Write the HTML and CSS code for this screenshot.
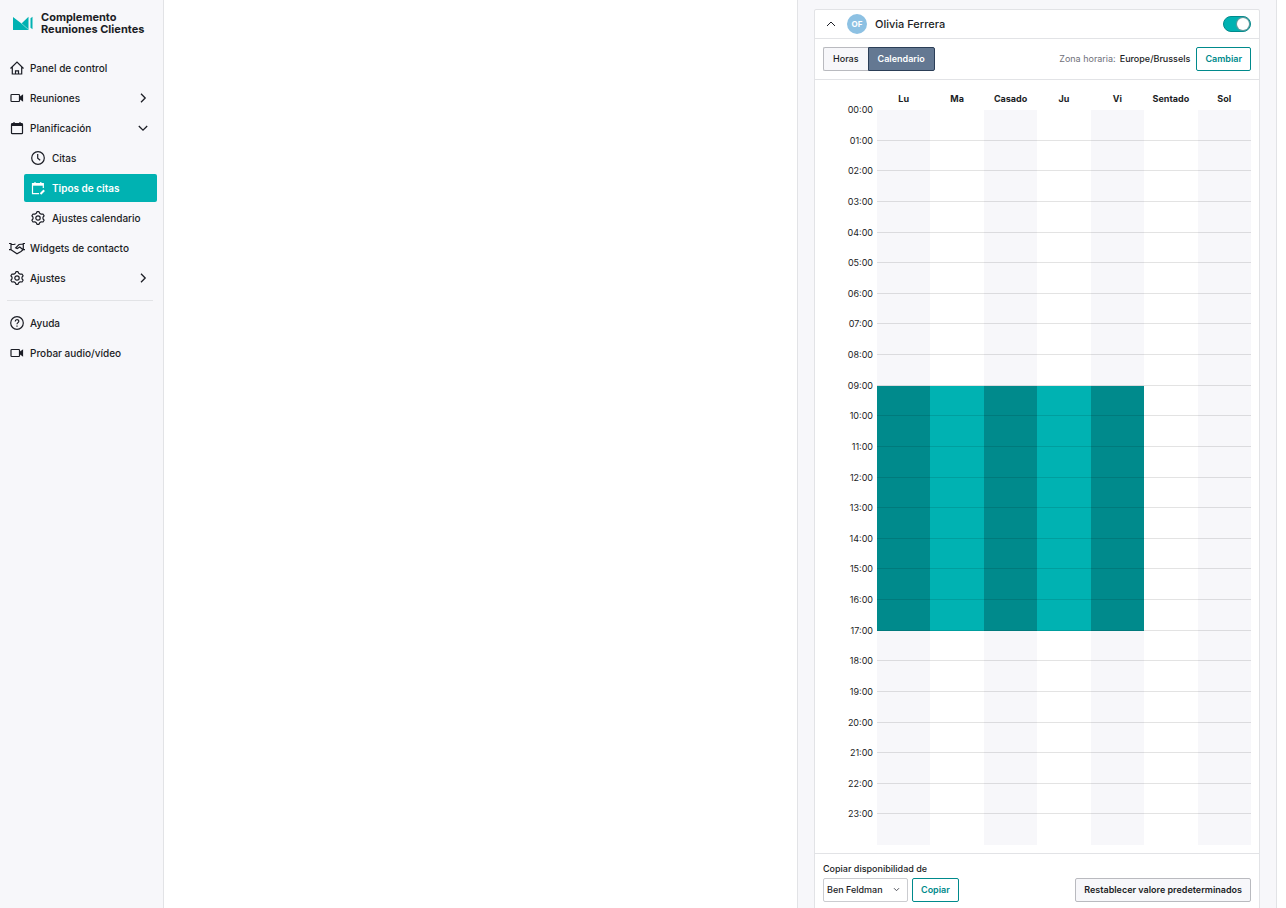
FILE: index.html
```html
<!DOCTYPE html>
<html lang="es">
<head>
    <meta charset="UTF-8">
    <title>Tipos de citas</title>
    <meta name="viewport" content="width=device-width, initial-scale=1">
    <link rel="stylesheet" href="styles.css">
</head>
<body>
<div class="app">
    <aside class="sidebar">
        <div class="brand">
            <svg width="20" height="14" viewBox="0 0 20 14"><path d="M0 1l8.500 6.500L15.500.8V14H0z" fill="#00b2b2"/><path d="M8 7l8 7" stroke="#8fdcdc" stroke-width=".8"/><path d="M17.500 2.300L19.500.8v12.400l-2-1.500z" fill="#00b2b2"/></svg>
            <strong>Complemento<br>Reuniones Clientes</strong>
        </div>
        <nav class="nav">
            <a href="#"><svg class="icon" viewBox="0 0 16 16"><path d="M1.500 8.500L8 2l6.500 6.500M3.300 7v7h9.400V7M6.500 14v-3.200h3V14"/></svg>Panel de control</a>
            <a href="#"><svg class="icon" viewBox="0 0 16 16"><rect x="2" y="4.500" width="8.500" height="7" rx=".8"/><path d="M11 7.200l2.500-1.700v5L11 8.800z" fill="currentColor"/></svg>Reuniones<svg class="arrow" viewBox="0 0 10 10"><path d="M3 .8L7.200 5 3 9.200"/></svg></a>
            <a href="#"><svg class="icon" viewBox="0 0 16 16"><rect x="2.500" y="3.700" width="11" height="10" rx=".8"/><path d="M2.500 5h11" stroke-width="2"/><path d="M5 2v2.500M11 2v2.500"/></svg>Planificación<svg class="arrow" viewBox="0 0 10 10"><path d="M.8 3L5 7.200 9.200 3"/></svg></a>
            <div class="subnav">
                <a href="#"><svg class="icon" viewBox="0 0 16 16"><circle cx="8" cy="8" r="6.300"/><path d="M7.700 4v4.200l2.500 2"/></svg>Citas</a>
                <a href="#" class="active"><svg class="icon" viewBox="0 0 16 16"><path d="M13.300 8V3.700H2.500v10H9M5 2v2M10.800 2v2"/><path d="M2.500 4.700h10.800" stroke-width="2"/><path d="M10.500 14l3.700-3.700" stroke-width="2"/></svg>Tipos de citas</a>
                <a href="#"><svg class="icon" viewBox="0 0 16 16"><path d="M6.300 3.300L7 1.700h2l.7 1.600 1.500.9 1.800-.2 1.100 1.800L13 7.200v1.600l1.100 1.400L13 12l-1.800-.2-1.500.9L9 14.300H7l-.7-1.600-1.500-.9L3 12l-1.100-1.800L3 8.800V7.200L1.900 5.800 3 4l1.800.2z" stroke-linejoin="round"/><circle cx="8" cy="8" r="2.200"/></svg>Ajustes calendario</a>
            </div>
            <a href="#"><svg class="icon" viewBox="0 0 16 16"><path d="M0 3.500h2v6.200H0M16 3.500h-1.700v6.200H16M2 4.500h3L6.500 4M14.300 4L10 4.500 6.700 7.800l1.500.7 2.600-1.500 3.200 2.700M2 9.700l6 4 4-2.200 2-1.800"/></svg>Widgets de contacto</a>
            <a href="#"><svg class="icon" viewBox="0 0 16 16"><path d="M6.300 3.300L7 1.700h2l.7 1.600 1.500.9 1.800-.2 1.100 1.800L13 7.200v1.600l1.100 1.400L13 12l-1.800-.2-1.500.9L9 14.300H7l-.7-1.600-1.500-.9L3 12l-1.100-1.800L3 8.800V7.200L1.900 5.800 3 4l1.800.2z" stroke-linejoin="round"/><circle cx="8" cy="8" r="2.200"/></svg>Ajustes<svg class="arrow" viewBox="0 0 10 10"><path d="M3 .8L7.200 5 3 9.200"/></svg></a>
            <hr>
            <a href="#"><svg class="icon" viewBox="0 0 16 16"><circle cx="8" cy="8" r="6.300"/><path d="M6.200 6.500C6.200 4 9.800 4 9.800 6.300 9.800 7.700 8 7.600 8 9.200M8 10.500v1.300"/></svg>Ayuda</a>
            <a href="#"><svg class="icon" viewBox="0 0 16 16"><rect x="2" y="4.500" width="8.500" height="7" rx=".8"/><path d="M11 7.200l2.500-1.700v5L11 8.800z" fill="currentColor"/></svg>Probar audio/vídeo</a>
        </nav>
    </aside>

    <main class="content"></main>

    <section class="panel">
        <div class="card">
            <div class="card-header">
                <button type="button" class="collapse" aria-label="Contraer"><svg width="10" height="10" viewBox="0 0 10 10"><path d="M1 7l4-4 4 4"/></svg></button>
                <span class="avatar">OF</span>
                <label class="name" for="enabled">Olivia Ferrera</label>
                <input type="checkbox" class="switch" id="enabled" checked>
            </div>
            <div class="toolbar">
                <div class="tabs">
                    <button type="button">Horas</button>
                    <button type="button" class="selected">Calendario</button>
                </div>
                <span class="timezone"><span>Zona horaria:</span> Europe/Brussels</span>
                <button type="button" class="btn btn-outline">Cambiar</button>
            </div>
            <table class="calendar">
                <thead>
                    <tr>
                        <td></td>
                        <th scope="col">Lu</th>
                        <th scope="col">Ma</th>
                        <th scope="col">Casado</th>
                        <th scope="col">Ju</th>
                        <th scope="col">Vi</th>
                        <th scope="col">Sentado</th>
                        <th scope="col">Sol</th>
                    </tr>
                </thead>
                <tbody id="hours"></tbody>
            </table>
            <form class="card-footer">
                <label for="copy_from">Copiar disponibilidad de</label>
                <div class="actions">
                    <div class="select">
                        <select id="copy_from">
                            <option>Ben Feldman</option>
                        </select>
                        <svg width="7" height="7" viewBox="0 0 7 7"><path d="M1 2.200l2.500 2.500L6 2.200"/></svg>
                    </div>
                    <button type="button" class="btn btn-outline">Copiar</button>
                    <button type="reset" class="btn btn-reset">Restablecer valore predeterminados</button>
                </div>
            </form>
        </div>
    </section>
</div>
<script src="calendar.js"></script>
</body>
</html>
```

FILE: styles.css
```css
* { box-sizing: border-box; }
body { margin: 0; font-family: Inter, "Liberation Sans", sans-serif; font-size: 10px; line-height: 12px; color: #1b1d25; background: #fff; overflow: hidden; }
button, select { font: inherit; color: inherit; }
svg { fill: none; flex: none; }
.app { display: flex; height: 100vh; }

/* Sidebar */
.sidebar { width: 164px; flex: none; background: #f7f7fa; border-right: 1px solid #e2e3e6; padding: 11px 6px 0 7px; }
.brand { display: flex; align-items: center; gap: 8px; padding-left: 6px; margin-bottom: 19px; font-size: 11px; }
.brand strong { font-weight: 700; white-space: nowrap; }
.nav { display: flex; flex-direction: column; gap: 2px; }
.nav a { display: flex; align-items: center; gap: 5px; height: 28px; padding: 0 9px 0 2px; border-radius: 2px; color: inherit; font-weight: 500; text-decoration: none; white-space: nowrap; }
.nav hr { width: 146px; margin: 6px 0; border: 0; border-top: 1px solid #e2e3e6; }
.subnav { display: flex; flex-direction: column; gap: 2px; margin-left: 17px; }
.nav .subnav a { gap: 6px; padding-left: 6px; }
.nav a.active { background: #00b2b2; color: #fff; font-weight: 600; }
.icon { width: 16px; height: 16px; stroke: currentColor; stroke-width: 1.2; }
.arrow { width: 10px; height: 10px; margin-left: auto; stroke: currentColor; stroke-width: 1.3; }

/* Panel */
.content { flex: 1; }
.panel { width: 480px; flex: none; margin-right: 9px; padding: 9px 16px; background: #f7f7fa; border: 1px solid #e2e3e6; border-width: 0 1px; font-size: 9px; }
.card { background: #fff; border: 1px solid #e2e3e6; border-radius: 2px; }
.card-header { display: flex; align-items: center; height: 29px; padding: 0 8px; border-bottom: 1px solid #e2e3e6; }
.collapse { display: flex; padding: 3px; border: 0; background: none; cursor: pointer; }
.collapse svg { stroke: currentColor; }
.avatar { width: 20px; height: 20px; margin: 0 8px; border-radius: 50%; background: #8dc1e3; color: #fff; font-size: 8px; font-weight: 700; line-height: 20px; text-align: center; }
.name { font-size: 11px; font-weight: 500; }
.switch { appearance: none; width: 28px; height: 16px; margin: 0 0 0 auto; border: 1px solid #008a8c; border-radius: 8px; background: #00b2b2; cursor: pointer; }
.switch::before { content: ""; display: block; width: 12px; height: 12px; margin: 1px 1px 1px 13px; border-radius: 50%; background: #fff; box-shadow: 0 0 1px 1px #71989b; }
.switch:not(:checked) { background: #b9babf; }
.switch:not(:checked)::before { margin-left: 1px; }
.toolbar { display: flex; align-items: center; gap: 6px; height: 41px; padding: 0 8px; border-bottom: 1px solid #e2e3e6; }
.tabs { display: flex; margin-right: auto; }
.tabs button { height: 24px; padding: 0 9px; border: 1px solid #b9babf; border-right: 0; border-radius: 2px 0 0 2px; background: #f7f7fa; font-weight: 500; cursor: pointer; }
.tabs .selected { border: 1px solid #2b3e57; border-radius: 0 2px 2px 0; background: #647892; color: #fff; font-weight: 600; }
.timezone { display: flex; gap: 4px; font-weight: 500; }
.timezone span { color: #6f717a; font-weight: 400; }
.btn { height: 24px; padding: 0 8px; border: 1px solid #b9babf; border-radius: 2px; background: #f7f7fa; font-weight: 600; white-space: nowrap; cursor: pointer; }
.btn-outline { border-color: #008a8c; background: #fff; color: #008a8c; }

/* Calendar */
.calendar { display: block; padding: 13px 8px 8px; }
.calendar thead, .calendar tbody { display: grid; }
.calendar tbody { height: 735px; grid-template-rows: repeat(24, 1fr); }
.calendar tr { display: grid; grid-template-columns: 54px repeat(7, 1fr); }
.calendar td, .calendar th { padding: 0; }
.calendar thead th { height: 17px; font-weight: 700; text-align: center; }
.calendar tbody th { margin-top: -6px; padding-right: 4px; font-weight: 400; text-align: right; }
.calendar tbody td { border-bottom: 1px solid rgba(0, 0, 0, 0.11); }
.calendar tbody tr:last-child td { border-bottom: 0; }
.calendar tbody td:nth-child(even) { background: #f7f7fa; }
.calendar tbody td.available { background: #00b2b2; }
.calendar tbody td.available:nth-child(even) { background: #008a8c; }

/* Footer */
.card-footer { padding: 9px 8px 8px; border-top: 1px solid #e2e3e6; font-weight: 500; }
.actions { display: flex; gap: 4px; margin-top: 3px; }
.select { position: relative; }
.select select { appearance: none; width: 85px; height: 24px; padding: 0 18px 0 3px; border: 1px solid #cbccd0; border-radius: 2px; background: #fff; }
.select svg { position: absolute; top: 8px; right: 8px; stroke: #51535c; pointer-events: none; }
.btn-reset { margin-left: auto; }
```

FILE: calendar.js
```js
const hours = document.getElementById('hours');

for (let h = 0; h < 24; h++) {
    const row = hours.insertRow();
    const label = document.createElement('th');
    label.scope = 'row';
    label.textContent = String(h).padStart(2, '0') + ':00';
    row.appendChild(label);
    for (let day = 0; day < 7; day++) {
        const cell = row.insertCell();
        // lunes a viernes, de 9 a 17
        if (day < 5 && h >= 9 && h < 17) {
            cell.className = 'available';
        }
    }
}
```
